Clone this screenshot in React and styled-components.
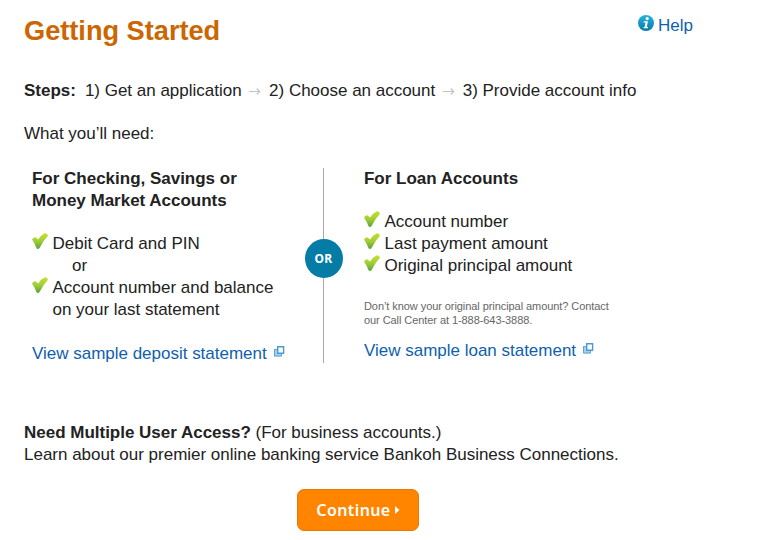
import React from "react";
import styled, {createGlobalStyle} from "styled-components";

const GlobalStyle = createGlobalStyle`
  body {
    margin: 0;
    background: #fff;
    color: #222;
    font: 17px/22px "Liberation Sans", Arial, sans-serif;
    letter-spacing: -0.01px;
  }
`;

const Page = styled.main`
  box-sizing: border-box;
  width: 759px;
  height: 540px;
  padding: 13px 66px 0 24px;
  overflow: hidden;
`;

const Header = styled.header`
  display: flex;
  justify-content: space-between;
  align-items: flex-start;
  height: 67px;
`;

const Title = styled.h1`
  margin: 0;
  color: #cc6600;
  font-size: 27.2px;
  line-height: 36px;
`;

const Link = styled.a`
  color: #0f5fae;
  text-decoration: none;
  white-space: nowrap;
`;

const HelpLink = styled(Link)`
  display: flex;
  gap: 4px;
  margin-top: 2px;
`;

const Steps = styled.div`
  display: flex;
  align-items: center;
  white-space: nowrap;

  strong {
    margin-right: 9px;
  }

  svg {
    margin: 1px 8px 0 7.5px;
  }
`;

const Line = styled.p`
  margin: ${props => props.$margin || "0"};
  white-space: nowrap;
`;

const Columns = styled.div`
  display: flex;
  margin-top: 23px;
  height: 195px;
`;

const Column = styled.section`
  width: ${props => props.$width};
  padding-left: ${props => props.$indent};
  flex: none;
`;

const Heading = styled.h2`
  margin: 0 0 21px;
  font-size: 17px;
  line-height: 22px;
`;

const Item = styled.div`
  display: flex;
  gap: 4.5px;
  white-space: nowrap;

  svg {
    flex: none;
  }
`;

const Or = styled.div`
  padding-left: 40px;
`;

const Note = styled.p`
  margin: 22px 0 13px;
  color: #666;
  font-size: 11px;
  line-height: 14px;
  letter-spacing: -0.07px;
  white-space: nowrap;
`;

const Divider = styled.div`
  display: flex;
  flex: none;
  flex-direction: column;
  align-items: center;
  width: 39px;
  height: 195px;

  &::before,
  &::after {
    content: "";
    width: 1px;
    flex: 71 0 0;
    background: #aaa;
  }

  &::after {
    flex-grow: 84;
  }
`;

const OrBadge = styled.span`
  width: 38px;
  height: 39px;
  border-radius: 50%;
  background: #047ca6;
  color: #fff;
  font: bold 12px/39px "Noto Sans", sans-serif;
  letter-spacing: 0.3px;
  text-align: center;
`;

const Business = styled.section`
  margin-top: 59px;
`;

const Continue = styled.button`
  display: flex;
  align-items: center;
  justify-content: center;
  box-sizing: border-box;
  width: 122px;
  height: 42px;
  margin: 23px 0 0 273px;
  padding: 0 0 1px;
  border: 1px solid #e87902;
  border-radius: 7px;
  background: #ff8400;
  color: #fff;
  font: 600 16px/20px "Noto Sans", sans-serif;
  letter-spacing: 0.4px;
  gap: 4px;
`;

const InfoIcon = () => (
    <svg width="16" height="17" viewBox="0 0 16 17">
        <defs>
            <linearGradient id="info" x1="0" y1="0" x2="0" y2="1">
                <stop offset="0" stopColor="#27b3dc"/>
                <stop offset="1" stopColor="#0579ae"/>
            </linearGradient>
        </defs>
        <circle cx="8" cy="8" r="8" fill="url(#info)"/>
        <circle cx="9.2" cy="3.6" r="1.6" fill="#fff"/>
        <path d="M5.7 6.3h4.2L8.8 11.9h1.3l-.2 1.3H5.5v-1l1.2-.4.8-4.3H5.6z" fill="#fff"/>
    </svg>
);

const CheckIcon = () => (
    <svg width="16" height="17" viewBox="0 0 16 17">
        <defs>
            <linearGradient id="check" x1="0" y1="0" x2="0" y2="1">
                <stop offset="0" stopColor="#c5e02e"/>
                <stop offset="0.5" stopColor="#a2ce35"/>
                <stop offset="1" stopColor="#55a43c"/>
            </linearGradient>
        </defs>
        <path d="M0 6.4Q1.6 4.3 3.3 4.2L6.2 6.5Q8.9 2 12.8.2Q15.5 0 16 2.7Q11 7.8 7.6 15Q6 16.8 4.5 15.2Q2.8 10.4 0 6.4z" fill="url(#check)"/>
    </svg>
);

const ArrowIcon = () => (
    <svg width="12" height="9" viewBox="0 0 12 9" fill="none" stroke="#c4c4c4" strokeWidth="1.2">
        <path d="M0 4.5H10.5M7.7 1.5 10.7 4.5 7.7 7.5"/>
    </svg>
);

const WindowIcon = () => (
    <svg width="11" height="11" viewBox="0 0 11 11" fill="none">
        <path d="M0 3H3V8H8V10.5H0z" fill="#a3d1ef"/>
        <path d="M3 3.5H.5V10H7.5V8" stroke="#5ca5d6"/>
        <path d="M3.7.7H9.6V7.2H3.7z" fill="#fff" stroke="#4b99ce" strokeWidth="1.4"/>
    </svg>
);

const StatementLink = styled(Link)`
  display: flex;

  svg {
    margin: 3px 0 0 7px;
  }
`;

const App = () => (
    <>
        <GlobalStyle/>
        <Page>
            <Header>
                <Title>Getting Started</Title>
                <HelpLink><InfoIcon/>Help</HelpLink>
            </Header>
            <Steps>
                <strong>Steps:</strong>
                1) Get an application
                <ArrowIcon/>
                2) Choose an account
                <ArrowIcon/>
                3) Provide account info
            </Steps>
            <Line $margin="21px 0 0">What you’ll need:</Line>
            <Columns>
                <Column $width="272px" $indent="8px">
                    <Heading>For Checking, Savings or<br/>Money Market Accounts</Heading>
                    <Item><CheckIcon/>Debit Card and PIN</Item>
                    <Or>or</Or>
                    <Item><CheckIcon/><span>Account number and balance<br/>on your last statement</span></Item>
                    <Line $margin="22px 0 0">
                        <StatementLink>View sample deposit statement<WindowIcon/></StatementLink>
                    </Line>
                </Column>
                <Divider><OrBadge>OR</OrBadge></Divider>
                <Column $width="270px" $indent="21px">
                    <Heading>For Loan Accounts</Heading>
                    <Item><CheckIcon/>Account number</Item>
                    <Item><CheckIcon/>Last payment amount</Item>
                    <Item><CheckIcon/>Original principal amount</Item>
                    <Note>Don’t know your original principal amount? Contact<br/>our Call Center at 1-888-643-3888.</Note>
                    <StatementLink>View sample loan statement<WindowIcon/></StatementLink>
                </Column>
            </Columns>
            <Business>
                <Line><strong>Need Multiple User Access?</strong> (For business accounts.)</Line>
                <Line>Learn about our premier online banking service Bankoh Business Connections.</Line>
            </Business>
            <Continue>
                Continue
                <svg width="5" height="8" viewBox="0 0 5 8"><path d="M0 0 4.5 4 0 8z" fill="#fff"/></svg>
            </Continue>
        </Page>
    </>
);

export default App;
